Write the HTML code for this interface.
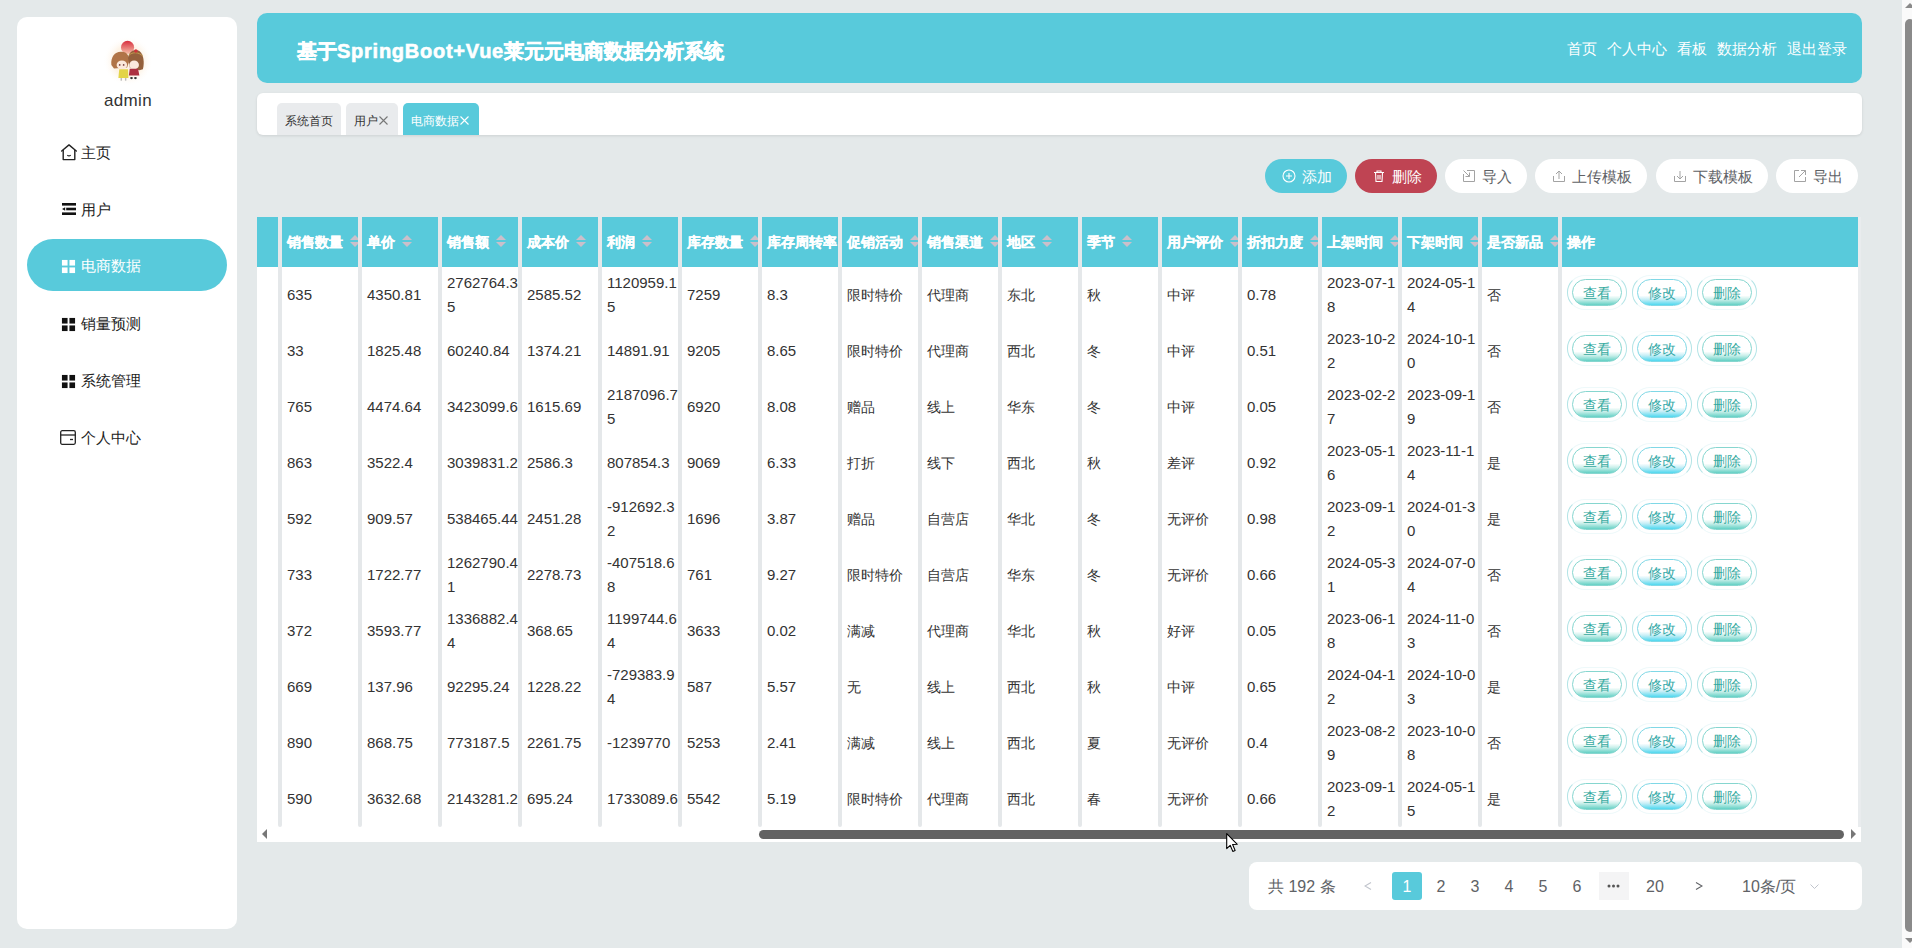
<!DOCTYPE html>
<html><head><meta charset="utf-8"><title>电商数据</title>
<style>
*{box-sizing:border-box;margin:0;padding:0}
html,body{width:1912px;height:948px;overflow:hidden}
body{background:#e4e9ea;font-family:"Liberation Sans",sans-serif;color:#333;position:relative}
.side{position:absolute;left:17px;top:17px;width:220px;height:912px;background:#fff;border-radius:10px}
.avatar{position:absolute;left:83px;top:17px;width:56px;height:56px}
.uname{position:absolute;left:1px;width:220px;top:74px;text-align:center;font-size:17px;color:#333;line-height:20px;letter-spacing:0.3px}
.menu{position:absolute;left:10px;top:222px}
.mi{position:absolute;left:10px;width:200px;height:52px;border-radius:26px;font-size:15px;color:#222;line-height:54px}
.mi .ic{position:absolute;left:34px;top:20px;width:15px;height:15px}
.mi .tx{position:absolute;left:54px;top:0}
.mi.act{background:#58cadb;color:#fff}
.hdr{position:absolute;left:257px;top:13px;width:1605px;height:70px;background:#58cadb;border-radius:10px}
.title{position:absolute;left:40px;top:26px;font-size:20px;font-weight:bold;color:#fff;-webkit-text-stroke:0.6px #fff;line-height:24px;white-space:nowrap}
.nav{position:absolute;right:15px;top:27px;font-size:15px;color:#fff;line-height:18px;white-space:nowrap}
.nav span{margin-left:10px}
.tabs{position:absolute;left:257px;top:93px;width:1605px;height:42px;background:#fff;border-radius:6px;box-shadow:0 1px 3px rgba(0,0,0,.1)}
.tab{position:absolute;top:10px;height:32px;background:#e9ebed;border-radius:5px 5px 0 0;font-size:12px;color:#333;line-height:36px;padding-left:8px;white-space:nowrap}
.tab.act{background:#58cadb;color:#fff}
.btn{position:absolute;top:159px;height:34px;border-radius:17px;font-size:15px;line-height:36px;white-space:nowrap;background:#fff;color:#606266}
.btn .bi{position:absolute;top:10px;width:14px;height:14px}
.btn .bt{position:absolute;top:0}
.btn.add{background:#58cadb;color:#fff}
.btn.del{background:#bf4453;color:#fff}
.table{position:absolute;left:257px;top:217px;width:1604px;height:625px;background:#fff;overflow:hidden}
.thead{position:absolute;left:0;top:0;height:50px;width:1605px;background:#e4e9ea}
.th{position:absolute;top:0;height:50px;background:#58cadb;color:#fff;font-weight:bold;font-size:14px;line-height:50px;overflow:hidden;white-space:nowrap}
.th{padding-left:5px}.th .ht{-webkit-text-stroke:0.25px #fff}.th .ht{display:inline-block;vertical-align:top}
.caret{display:inline-block;position:relative;vertical-align:top;margin-top:18px;margin-left:7px;width:10px;height:12px}
.caret i{position:absolute;left:0;width:0;height:0;border:5px solid transparent}
.caret .up{top:-5px;border-bottom-color:#cbbfca}
.caret .dn{top:7px;border-top-color:#cbbfca}
.tbody{position:absolute;left:0;top:50px;width:1605px;height:560px}
.tr{position:relative;height:56px}
.td{position:absolute;top:0;height:56px;font-size:14px;color:#333}
.td .cell{position:absolute;left:5px;width:68px;top:50%;transform:translateY(-50%);line-height:24px;word-break:break-all}
.vsep{position:absolute;top:0;width:4px;height:610px;background:#e5e8ea;border-radius:0 0 2px 2px}
.cop{}
.ob{position:absolute;top:8px;width:60px;height:35px;border-radius:18px/17px;border:1px solid #b3e4e6;border-top-color:#eef9fa;border-bottom-color:#eef9fa}
.ib{position:absolute;left:4px;top:3px;width:50px;height:27px;border-radius:14px;border:1px solid #86d6cf;font-size:14px;line-height:27px;text-align:center;color:#35aa9f;background:linear-gradient(#fff 0%,#fff 62%,#c9efea 78%,#62d0c4 100%)}
.ib.b2{border-color:#80d8e6;color:#35a9a8;background:linear-gradient(#fff 0%,#fff 62%,#c5eef6 78%,#4fd8ef 100%)}
.hscroll{position:absolute;left:0;top:610px;width:1604px;height:15px;background:#fff}
.thumb{position:absolute;left:502px;top:3px;width:1085px;height:9px;border-radius:5px;background:#636363}
.la{position:absolute;left:5px;top:2px;width:0;height:0;border:5px solid transparent;border-right:5px solid #777;border-left:0}
.ra{position:absolute;left:1594px;top:2px;width:0;height:0;border:5px solid transparent;border-left:5px solid #777;border-right:0}
.pager{position:absolute;left:1249px;top:862px;width:613px;height:48px;background:#fff;border-radius:8px;font-size:16px;color:#606266}
.pg{position:absolute;top:10px;height:28px;line-height:30px;text-align:center;min-width:30px;white-space:nowrap}
.pg.act{background:#58cadb;color:#fff;border-radius:3px}
.pg.more{background:#f4f4f5}
.vscroll{position:absolute;left:1902px;top:0;width:10px;height:948px;background:#fafafa}
.vthumb{position:absolute;left:3px;top:19px;width:10px;height:913px;border-radius:5px;background:#8a8a8a}

.title .lat{letter-spacing:0.75px}
.cursor{position:absolute;left:1226px;top:833px;width:13px;height:20px}
.va{position:absolute;left:3px;width:0;height:0;border:5px solid transparent}
.va.u{top:-2px;border-bottom-color:#8a8a8a}
.va.d{top:938px;border-top-color:#8a8a8a}
.tab .x{display:inline-block;width:9px;height:9px;vertical-align:top;margin-top:13px;margin-left:1px}
.sv{position:absolute}
.rsep{position:absolute;left:1601px;top:0;width:4px;height:610px;background:#e9ecee}
.td .cell.num{font-size:15px;width:72px}

</style></head><body>
<div class="side">
  <div class="avatar">
    <svg width="56" height="56" viewBox="0 0 56 56">
      <defs><linearGradient id="sun" x1="0" y1="0" x2="0" y2="1"><stop offset="0" stop-color="#d83040"/><stop offset="1" stop-color="#f6c0a8"/></linearGradient>
      <radialGradient id="glow"><stop offset="0.6" stop-color="#fdf3e6"/><stop offset="1" stop-color="#fff" stop-opacity="0"/></radialGradient></defs>
      <circle cx="28" cy="27" r="25" fill="url(#glow)"/>
      <g transform="translate(3.5 3.8) scale(0.875)">
      <circle cx="27.5" cy="11" r="7.5" fill="url(#sun)"/>
      <path d="M9 31 C8 21 14 15 21 16 C27 16 30 21 29 28 L27 34 L12 35Z" fill="#b07448"/>
      <path d="M28 23 C29 15 36 12 41 15 C46 19 47 28 45 36 L41 37 L30 34Z" fill="#94603c"/>
      <path d="M29 20 C33 16 40 16 45 21" fill="none" stroke="#c8a050" stroke-width="1"/>
      <circle cx="37" cy="15" r="2" fill="#d0303a"/>
      <ellipse cx="21" cy="31" rx="6" ry="5" fill="#fbe9dc"/>
      <ellipse cx="35" cy="31" rx="5.5" ry="5" fill="#fbe9dc"/>
      <circle cx="18.5" cy="31" r="1" fill="#7a4040"/><circle cx="23" cy="31" r="1" fill="#7a4040"/>
      <path d="M18 36 H28 L28.5 46 H17Z" fill="#e3d448"/>
      <path d="M30 35.5 H39.5 L41 43 H29Z" fill="#ad3040"/>
      <rect x="19.5" y="46" width="1.6" height="3" fill="#bbb"/><rect x="24.5" y="46" width="1.6" height="3" fill="#bbb"/>
      <ellipse cx="32" cy="46" rx="1.6" ry="1.3" fill="#333"/><ellipse cx="36.5" cy="46" rx="1.6" ry="1.3" fill="#333"/>
      </g>
    </svg>
  </div>
  <div class="uname">admin</div>
</div>
<div class="mi" style="left:27px;top:126px"><svg class="ic" style="width:16px;height:17px;top:18px;left:34px" viewBox="0 0 16 17"><path d="M0.7 7 L8 0.9 L15.3 7" fill="none" stroke="#222" stroke-width="1.4" stroke-linecap="round" stroke-linejoin="round"/><path d="M2.2 5.9 V15.6 H13.8 V5.9" fill="none" stroke="#222" stroke-width="1.4" stroke-linejoin="round"/><path d="M6.3 11.3 Q8 12.6 9.7 11.3" fill="none" stroke="#222" stroke-width="1.2"/></svg><span class="tx">主页</span></div>
<div class="mi" style="left:27px;top:183px"><svg class="ic" style="width:14px;height:12px;top:20px;left:35px" viewBox="0 0 14 12"><rect x="0" y="0" width="14" height="2.6" fill="#111"/><rect x="4.2" y="4.7" width="9.8" height="2.6" fill="#111"/><rect x="0" y="9.4" width="14" height="2.6" fill="#111"/><path d="M0 6 L3.2 4.2 L3.2 7.8Z" fill="#111"/></svg><span class="tx">用户</span></div>
<div class="mi act" style="left:27px;top:239px"><svg class="ic" viewBox="0 0 16 16"><rect x="1" y="1" width="6" height="6" fill="#fff"/><rect x="9" y="1" width="6" height="6" fill="#fff"/><rect x="1" y="9" width="6" height="6" fill="#fff"/><rect x="9" y="9" width="6" height="6" fill="#fff"/></svg><span class="tx">电商数据</span></div>
<div class="mi" style="left:27px;top:297px"><svg class="ic" viewBox="0 0 16 16"><rect x="1" y="1" width="6" height="6" fill="#111"/><rect x="9" y="1" width="6" height="6" fill="#111"/><rect x="1" y="9" width="6" height="6" fill="#111"/><rect x="9" y="9" width="6" height="6" fill="#111"/></svg><span class="tx">销量预测</span></div>
<div class="mi" style="left:27px;top:354px"><svg class="ic" viewBox="0 0 16 16"><rect x="1" y="1" width="6" height="6" fill="#111"/><rect x="9" y="1" width="6" height="6" fill="#111"/><rect x="1" y="9" width="6" height="6" fill="#111"/><rect x="9" y="9" width="6" height="6" fill="#111"/></svg><span class="tx">系统管理</span></div>
<div class="mi" style="left:27px;top:411px"><svg class="ic" style="width:16px;height:15px;top:19px;left:33px" viewBox="0 0 16 15"><rect x="0.7" y="0.7" width="14.6" height="13.6" rx="1.5" fill="none" stroke="#222" stroke-width="1.3"/><line x1="0.7" y1="5" x2="15.3" y2="5" stroke="#222" stroke-width="1.3"/><line x1="10" y1="9.5" x2="13" y2="9.5" stroke="#222" stroke-width="1.3"/></svg><span class="tx">个人中心</span></div>

<div class="hdr">
  <div class="title">基于<span class="lat">SpringBoot+Vue</span>莱元元电商数据分析系统</div>
  <div class="nav"><span>首页</span><span>个人中心</span><span>看板</span><span>数据分析</span><span>退出登录</span></div>
</div>
<div class="tabs">
  <div class="tab" style="left:20px;width:64px">系统首页</div>
  <div class="tab" style="left:89px;width:52px">用户<svg class="x" viewBox="0 0 9 9"><path d="M0.5 0.5L8.5 8.5M8.5 0.5L0.5 8.5" stroke="#777" stroke-width="1.1"/></svg></div>
  <div class="tab act" style="left:146px;width:76px">电商数据<svg class="x" viewBox="0 0 9 9"><path d="M0.5 0.5L8.5 8.5M8.5 0.5L0.5 8.5" stroke="#fff" stroke-width="1.1"/></svg></div>
</div>

<div class="btn add" style="left:1265px;width:82px"><svg class="bi" style="left:17px" viewBox="0 0 14 14"><circle cx="7" cy="7" r="6" fill="none" stroke="#fff" stroke-width="1.1"/><path d="M7 4V10M4 7H10" stroke="#fff" stroke-width="1.1"/></svg><span class="bt" style="left:37px">添加</span></div>
<div class="btn del" style="left:1355px;width:82px"><svg class="bi" style="left:17px" viewBox="0 0 14 14"><path d="M2 3.5H12M5 3.5V2H9V3.5M3.5 3.5L4 12.5H10L10.5 3.5M6 6V10.5M8 6V10.5" fill="none" stroke="#fff" stroke-width="1.1"/></svg><span class="bt" style="left:37px">删除</span></div>
<div class="btn" style="left:1445px;width:82px"><svg class="bi" style="left:17px" viewBox="0 0 14 14"><path d="M5 1.5H12.5V12.5H1.5V5M1.5 1.5L7.5 7.5M7.5 3.5V7.5H3.5" fill="none" stroke="#a3a3a3" stroke-width="1"/></svg><span class="bt" style="left:37px">导入</span></div>
<div class="btn" style="left:1535px;width:112px"><svg class="bi" style="left:17px" viewBox="0 0 14 14"><path d="M1.5 7V12.5H12.5V7M7 10V2M4 5L7 2L10 5" fill="none" stroke="#a3a3a3" stroke-width="1"/></svg><span class="bt" style="left:37px">上传模板</span></div>
<div class="btn" style="left:1656px;width:112px"><svg class="bi" style="left:17px" viewBox="0 0 14 14"><path d="M1.5 7V12.5H12.5V7M7 2V10M4 7L7 10L10 7" fill="none" stroke="#a3a3a3" stroke-width="1"/></svg><span class="bt" style="left:37px">下载模板</span></div>
<div class="btn" style="left:1776px;width:82px"><svg class="bi" style="left:17px" viewBox="0 0 14 14"><path d="M6 1.5H1.5V12.5H12.5V8M8 1.5H12.5V6M12.5 1.5L6 8" fill="none" stroke="#a3a3a3" stroke-width="1"/></svg><span class="bt" style="left:37px">导出</span></div>

<div class="table"><div class="thead"><div class="th c0" style="left:0;width:21px"></div><div class="th c" style="left:25px;width:76px"><span class="ht">销售数量</span><span class="caret"><i class="up"></i><i class="dn"></i></span></div><div class="th c" style="left:105px;width:76px"><span class="ht">单价</span><span class="caret"><i class="up"></i><i class="dn"></i></span></div><div class="th c" style="left:185px;width:76px"><span class="ht">销售额</span><span class="caret"><i class="up"></i><i class="dn"></i></span></div><div class="th c" style="left:265px;width:76px"><span class="ht">成本价</span><span class="caret"><i class="up"></i><i class="dn"></i></span></div><div class="th c" style="left:345px;width:76px"><span class="ht">利润</span><span class="caret"><i class="up"></i><i class="dn"></i></span></div><div class="th c" style="left:425px;width:76px"><span class="ht">库存数量</span><span class="caret"><i class="up"></i><i class="dn"></i></span></div><div class="th c" style="left:505px;width:76px"><span class="ht">库存周转率</span><span class="caret"><i class="up"></i><i class="dn"></i></span></div><div class="th c" style="left:585px;width:76px"><span class="ht">促销活动</span><span class="caret"><i class="up"></i><i class="dn"></i></span></div><div class="th c" style="left:665px;width:76px"><span class="ht">销售渠道</span><span class="caret"><i class="up"></i><i class="dn"></i></span></div><div class="th c" style="left:745px;width:76px"><span class="ht">地区</span><span class="caret"><i class="up"></i><i class="dn"></i></span></div><div class="th c" style="left:825px;width:76px"><span class="ht">季节</span><span class="caret"><i class="up"></i><i class="dn"></i></span></div><div class="th c" style="left:905px;width:76px"><span class="ht">用户评价</span><span class="caret"><i class="up"></i><i class="dn"></i></span></div><div class="th c" style="left:985px;width:76px"><span class="ht">折扣力度</span><span class="caret"><i class="up"></i><i class="dn"></i></span></div><div class="th c" style="left:1065px;width:76px"><span class="ht">上架时间</span><span class="caret"><i class="up"></i><i class="dn"></i></span></div><div class="th c" style="left:1145px;width:76px"><span class="ht">下架时间</span><span class="caret"><i class="up"></i><i class="dn"></i></span></div><div class="th c" style="left:1225px;width:76px"><span class="ht">是否新品</span><span class="caret"><i class="up"></i><i class="dn"></i></span></div><div class="th cop" style="left:1305px;width:296px"><span class="ht">操作</span></div></div><div class="tbody"><div class="tr"><div class="td c0" style="left:0;width:21px"></div><div class="td c" style="left:25px;width:76px"><div class="cell num">635</div></div><div class="td c" style="left:105px;width:76px"><div class="cell num">4350.81</div></div><div class="td c" style="left:185px;width:76px"><div class="cell num">2762764.35</div></div><div class="td c" style="left:265px;width:76px"><div class="cell num">2585.52</div></div><div class="td c" style="left:345px;width:76px"><div class="cell num">1120959.15</div></div><div class="td c" style="left:425px;width:76px"><div class="cell num">7259</div></div><div class="td c" style="left:505px;width:76px"><div class="cell num">8.3</div></div><div class="td c" style="left:585px;width:76px"><div class="cell">限时特价</div></div><div class="td c" style="left:665px;width:76px"><div class="cell">代理商</div></div><div class="td c" style="left:745px;width:76px"><div class="cell">东北</div></div><div class="td c" style="left:825px;width:76px"><div class="cell">秋</div></div><div class="td c" style="left:905px;width:76px"><div class="cell">中评</div></div><div class="td c" style="left:985px;width:76px"><div class="cell num">0.78</div></div><div class="td c" style="left:1065px;width:76px"><div class="cell num">2023-07-18</div></div><div class="td c" style="left:1145px;width:76px"><div class="cell num">2024-05-14</div></div><div class="td c" style="left:1225px;width:76px"><div class="cell">否</div></div><div class="td cop" style="left:1305px;width:296px"><span class="ob" style="left:5px"><span class="ib b1">查看</span></span><span class="ob" style="left:70px"><span class="ib b2">修改</span></span><span class="ob" style="left:135px"><span class="ib b3">删除</span></span></div></div><div class="tr"><div class="td c0" style="left:0;width:21px"></div><div class="td c" style="left:25px;width:76px"><div class="cell num">33</div></div><div class="td c" style="left:105px;width:76px"><div class="cell num">1825.48</div></div><div class="td c" style="left:185px;width:76px"><div class="cell num">60240.84</div></div><div class="td c" style="left:265px;width:76px"><div class="cell num">1374.21</div></div><div class="td c" style="left:345px;width:76px"><div class="cell num">14891.91</div></div><div class="td c" style="left:425px;width:76px"><div class="cell num">9205</div></div><div class="td c" style="left:505px;width:76px"><div class="cell num">8.65</div></div><div class="td c" style="left:585px;width:76px"><div class="cell">限时特价</div></div><div class="td c" style="left:665px;width:76px"><div class="cell">代理商</div></div><div class="td c" style="left:745px;width:76px"><div class="cell">西北</div></div><div class="td c" style="left:825px;width:76px"><div class="cell">冬</div></div><div class="td c" style="left:905px;width:76px"><div class="cell">中评</div></div><div class="td c" style="left:985px;width:76px"><div class="cell num">0.51</div></div><div class="td c" style="left:1065px;width:76px"><div class="cell num">2023-10-22</div></div><div class="td c" style="left:1145px;width:76px"><div class="cell num">2024-10-10</div></div><div class="td c" style="left:1225px;width:76px"><div class="cell">否</div></div><div class="td cop" style="left:1305px;width:296px"><span class="ob" style="left:5px"><span class="ib b1">查看</span></span><span class="ob" style="left:70px"><span class="ib b2">修改</span></span><span class="ob" style="left:135px"><span class="ib b3">删除</span></span></div></div><div class="tr"><div class="td c0" style="left:0;width:21px"></div><div class="td c" style="left:25px;width:76px"><div class="cell num">765</div></div><div class="td c" style="left:105px;width:76px"><div class="cell num">4474.64</div></div><div class="td c" style="left:185px;width:76px"><div class="cell num">3423099.6</div></div><div class="td c" style="left:265px;width:76px"><div class="cell num">1615.69</div></div><div class="td c" style="left:345px;width:76px"><div class="cell num">2187096.75</div></div><div class="td c" style="left:425px;width:76px"><div class="cell num">6920</div></div><div class="td c" style="left:505px;width:76px"><div class="cell num">8.08</div></div><div class="td c" style="left:585px;width:76px"><div class="cell">赠品</div></div><div class="td c" style="left:665px;width:76px"><div class="cell">线上</div></div><div class="td c" style="left:745px;width:76px"><div class="cell">华东</div></div><div class="td c" style="left:825px;width:76px"><div class="cell">冬</div></div><div class="td c" style="left:905px;width:76px"><div class="cell">中评</div></div><div class="td c" style="left:985px;width:76px"><div class="cell num">0.05</div></div><div class="td c" style="left:1065px;width:76px"><div class="cell num">2023-02-27</div></div><div class="td c" style="left:1145px;width:76px"><div class="cell num">2023-09-19</div></div><div class="td c" style="left:1225px;width:76px"><div class="cell">否</div></div><div class="td cop" style="left:1305px;width:296px"><span class="ob" style="left:5px"><span class="ib b1">查看</span></span><span class="ob" style="left:70px"><span class="ib b2">修改</span></span><span class="ob" style="left:135px"><span class="ib b3">删除</span></span></div></div><div class="tr"><div class="td c0" style="left:0;width:21px"></div><div class="td c" style="left:25px;width:76px"><div class="cell num">863</div></div><div class="td c" style="left:105px;width:76px"><div class="cell num">3522.4</div></div><div class="td c" style="left:185px;width:76px"><div class="cell num">3039831.2</div></div><div class="td c" style="left:265px;width:76px"><div class="cell num">2586.3</div></div><div class="td c" style="left:345px;width:76px"><div class="cell num">807854.3</div></div><div class="td c" style="left:425px;width:76px"><div class="cell num">9069</div></div><div class="td c" style="left:505px;width:76px"><div class="cell num">6.33</div></div><div class="td c" style="left:585px;width:76px"><div class="cell">打折</div></div><div class="td c" style="left:665px;width:76px"><div class="cell">线下</div></div><div class="td c" style="left:745px;width:76px"><div class="cell">西北</div></div><div class="td c" style="left:825px;width:76px"><div class="cell">秋</div></div><div class="td c" style="left:905px;width:76px"><div class="cell">差评</div></div><div class="td c" style="left:985px;width:76px"><div class="cell num">0.92</div></div><div class="td c" style="left:1065px;width:76px"><div class="cell num">2023-05-16</div></div><div class="td c" style="left:1145px;width:76px"><div class="cell num">2023-11-14</div></div><div class="td c" style="left:1225px;width:76px"><div class="cell">是</div></div><div class="td cop" style="left:1305px;width:296px"><span class="ob" style="left:5px"><span class="ib b1">查看</span></span><span class="ob" style="left:70px"><span class="ib b2">修改</span></span><span class="ob" style="left:135px"><span class="ib b3">删除</span></span></div></div><div class="tr"><div class="td c0" style="left:0;width:21px"></div><div class="td c" style="left:25px;width:76px"><div class="cell num">592</div></div><div class="td c" style="left:105px;width:76px"><div class="cell num">909.57</div></div><div class="td c" style="left:185px;width:76px"><div class="cell num">538465.44</div></div><div class="td c" style="left:265px;width:76px"><div class="cell num">2451.28</div></div><div class="td c" style="left:345px;width:76px"><div class="cell num">-912692.32</div></div><div class="td c" style="left:425px;width:76px"><div class="cell num">1696</div></div><div class="td c" style="left:505px;width:76px"><div class="cell num">3.87</div></div><div class="td c" style="left:585px;width:76px"><div class="cell">赠品</div></div><div class="td c" style="left:665px;width:76px"><div class="cell">自营店</div></div><div class="td c" style="left:745px;width:76px"><div class="cell">华北</div></div><div class="td c" style="left:825px;width:76px"><div class="cell">冬</div></div><div class="td c" style="left:905px;width:76px"><div class="cell">无评价</div></div><div class="td c" style="left:985px;width:76px"><div class="cell num">0.98</div></div><div class="td c" style="left:1065px;width:76px"><div class="cell num">2023-09-12</div></div><div class="td c" style="left:1145px;width:76px"><div class="cell num">2024-01-30</div></div><div class="td c" style="left:1225px;width:76px"><div class="cell">是</div></div><div class="td cop" style="left:1305px;width:296px"><span class="ob" style="left:5px"><span class="ib b1">查看</span></span><span class="ob" style="left:70px"><span class="ib b2">修改</span></span><span class="ob" style="left:135px"><span class="ib b3">删除</span></span></div></div><div class="tr"><div class="td c0" style="left:0;width:21px"></div><div class="td c" style="left:25px;width:76px"><div class="cell num">733</div></div><div class="td c" style="left:105px;width:76px"><div class="cell num">1722.77</div></div><div class="td c" style="left:185px;width:76px"><div class="cell num">1262790.41</div></div><div class="td c" style="left:265px;width:76px"><div class="cell num">2278.73</div></div><div class="td c" style="left:345px;width:76px"><div class="cell num">-407518.68</div></div><div class="td c" style="left:425px;width:76px"><div class="cell num">761</div></div><div class="td c" style="left:505px;width:76px"><div class="cell num">9.27</div></div><div class="td c" style="left:585px;width:76px"><div class="cell">限时特价</div></div><div class="td c" style="left:665px;width:76px"><div class="cell">自营店</div></div><div class="td c" style="left:745px;width:76px"><div class="cell">华东</div></div><div class="td c" style="left:825px;width:76px"><div class="cell">冬</div></div><div class="td c" style="left:905px;width:76px"><div class="cell">无评价</div></div><div class="td c" style="left:985px;width:76px"><div class="cell num">0.66</div></div><div class="td c" style="left:1065px;width:76px"><div class="cell num">2024-05-31</div></div><div class="td c" style="left:1145px;width:76px"><div class="cell num">2024-07-04</div></div><div class="td c" style="left:1225px;width:76px"><div class="cell">否</div></div><div class="td cop" style="left:1305px;width:296px"><span class="ob" style="left:5px"><span class="ib b1">查看</span></span><span class="ob" style="left:70px"><span class="ib b2">修改</span></span><span class="ob" style="left:135px"><span class="ib b3">删除</span></span></div></div><div class="tr"><div class="td c0" style="left:0;width:21px"></div><div class="td c" style="left:25px;width:76px"><div class="cell num">372</div></div><div class="td c" style="left:105px;width:76px"><div class="cell num">3593.77</div></div><div class="td c" style="left:185px;width:76px"><div class="cell num">1336882.44</div></div><div class="td c" style="left:265px;width:76px"><div class="cell num">368.65</div></div><div class="td c" style="left:345px;width:76px"><div class="cell num">1199744.64</div></div><div class="td c" style="left:425px;width:76px"><div class="cell num">3633</div></div><div class="td c" style="left:505px;width:76px"><div class="cell num">0.02</div></div><div class="td c" style="left:585px;width:76px"><div class="cell">满减</div></div><div class="td c" style="left:665px;width:76px"><div class="cell">代理商</div></div><div class="td c" style="left:745px;width:76px"><div class="cell">华北</div></div><div class="td c" style="left:825px;width:76px"><div class="cell">秋</div></div><div class="td c" style="left:905px;width:76px"><div class="cell">好评</div></div><div class="td c" style="left:985px;width:76px"><div class="cell num">0.05</div></div><div class="td c" style="left:1065px;width:76px"><div class="cell num">2023-06-18</div></div><div class="td c" style="left:1145px;width:76px"><div class="cell num">2024-11-03</div></div><div class="td c" style="left:1225px;width:76px"><div class="cell">否</div></div><div class="td cop" style="left:1305px;width:296px"><span class="ob" style="left:5px"><span class="ib b1">查看</span></span><span class="ob" style="left:70px"><span class="ib b2">修改</span></span><span class="ob" style="left:135px"><span class="ib b3">删除</span></span></div></div><div class="tr"><div class="td c0" style="left:0;width:21px"></div><div class="td c" style="left:25px;width:76px"><div class="cell num">669</div></div><div class="td c" style="left:105px;width:76px"><div class="cell num">137.96</div></div><div class="td c" style="left:185px;width:76px"><div class="cell num">92295.24</div></div><div class="td c" style="left:265px;width:76px"><div class="cell num">1228.22</div></div><div class="td c" style="left:345px;width:76px"><div class="cell num">-729383.94</div></div><div class="td c" style="left:425px;width:76px"><div class="cell num">587</div></div><div class="td c" style="left:505px;width:76px"><div class="cell num">5.57</div></div><div class="td c" style="left:585px;width:76px"><div class="cell">无</div></div><div class="td c" style="left:665px;width:76px"><div class="cell">线上</div></div><div class="td c" style="left:745px;width:76px"><div class="cell">西北</div></div><div class="td c" style="left:825px;width:76px"><div class="cell">秋</div></div><div class="td c" style="left:905px;width:76px"><div class="cell">中评</div></div><div class="td c" style="left:985px;width:76px"><div class="cell num">0.65</div></div><div class="td c" style="left:1065px;width:76px"><div class="cell num">2024-04-12</div></div><div class="td c" style="left:1145px;width:76px"><div class="cell num">2024-10-03</div></div><div class="td c" style="left:1225px;width:76px"><div class="cell">是</div></div><div class="td cop" style="left:1305px;width:296px"><span class="ob" style="left:5px"><span class="ib b1">查看</span></span><span class="ob" style="left:70px"><span class="ib b2">修改</span></span><span class="ob" style="left:135px"><span class="ib b3">删除</span></span></div></div><div class="tr"><div class="td c0" style="left:0;width:21px"></div><div class="td c" style="left:25px;width:76px"><div class="cell num">890</div></div><div class="td c" style="left:105px;width:76px"><div class="cell num">868.75</div></div><div class="td c" style="left:185px;width:76px"><div class="cell num">773187.5</div></div><div class="td c" style="left:265px;width:76px"><div class="cell num">2261.75</div></div><div class="td c" style="left:345px;width:76px"><div class="cell num">-1239770</div></div><div class="td c" style="left:425px;width:76px"><div class="cell num">5253</div></div><div class="td c" style="left:505px;width:76px"><div class="cell num">2.41</div></div><div class="td c" style="left:585px;width:76px"><div class="cell">满减</div></div><div class="td c" style="left:665px;width:76px"><div class="cell">线上</div></div><div class="td c" style="left:745px;width:76px"><div class="cell">西北</div></div><div class="td c" style="left:825px;width:76px"><div class="cell">夏</div></div><div class="td c" style="left:905px;width:76px"><div class="cell">无评价</div></div><div class="td c" style="left:985px;width:76px"><div class="cell num">0.4</div></div><div class="td c" style="left:1065px;width:76px"><div class="cell num">2023-08-29</div></div><div class="td c" style="left:1145px;width:76px"><div class="cell num">2023-10-08</div></div><div class="td c" style="left:1225px;width:76px"><div class="cell">否</div></div><div class="td cop" style="left:1305px;width:296px"><span class="ob" style="left:5px"><span class="ib b1">查看</span></span><span class="ob" style="left:70px"><span class="ib b2">修改</span></span><span class="ob" style="left:135px"><span class="ib b3">删除</span></span></div></div><div class="tr"><div class="td c0" style="left:0;width:21px"></div><div class="td c" style="left:25px;width:76px"><div class="cell num">590</div></div><div class="td c" style="left:105px;width:76px"><div class="cell num">3632.68</div></div><div class="td c" style="left:185px;width:76px"><div class="cell num">2143281.2</div></div><div class="td c" style="left:265px;width:76px"><div class="cell num">695.24</div></div><div class="td c" style="left:345px;width:76px"><div class="cell num">1733089.6</div></div><div class="td c" style="left:425px;width:76px"><div class="cell num">5542</div></div><div class="td c" style="left:505px;width:76px"><div class="cell num">5.19</div></div><div class="td c" style="left:585px;width:76px"><div class="cell">限时特价</div></div><div class="td c" style="left:665px;width:76px"><div class="cell">代理商</div></div><div class="td c" style="left:745px;width:76px"><div class="cell">西北</div></div><div class="td c" style="left:825px;width:76px"><div class="cell">春</div></div><div class="td c" style="left:905px;width:76px"><div class="cell">无评价</div></div><div class="td c" style="left:985px;width:76px"><div class="cell num">0.66</div></div><div class="td c" style="left:1065px;width:76px"><div class="cell num">2023-09-12</div></div><div class="td c" style="left:1145px;width:76px"><div class="cell num">2024-05-15</div></div><div class="td c" style="left:1225px;width:76px"><div class="cell">是</div></div><div class="td cop" style="left:1305px;width:296px"><span class="ob" style="left:5px"><span class="ib b1">查看</span></span><span class="ob" style="left:70px"><span class="ib b2">修改</span></span><span class="ob" style="left:135px"><span class="ib b3">删除</span></span></div></div></div><div class="vsep" style="left:21px"></div><div class="vsep" style="left:101px"></div><div class="vsep" style="left:181px"></div><div class="vsep" style="left:261px"></div><div class="vsep" style="left:341px"></div><div class="vsep" style="left:421px"></div><div class="vsep" style="left:501px"></div><div class="vsep" style="left:581px"></div><div class="vsep" style="left:661px"></div><div class="vsep" style="left:741px"></div><div class="vsep" style="left:821px"></div><div class="vsep" style="left:901px"></div><div class="vsep" style="left:981px"></div><div class="vsep" style="left:1061px"></div><div class="vsep" style="left:1141px"></div><div class="vsep" style="left:1221px"></div><div class="vsep" style="left:1301px"></div><div class="rsep"></div><div class="hscroll"><i class="la"></i><div class="thumb"></div><i class="ra"></i></div></div>

<div class="pager">
  <span class="pg" style="left:19px">共 192 条</span>
  <svg class="sv" style="left:115px;top:20px;width:8px;height:8px" viewBox="0 0 8 8"><path d="M7 0.5L1 4L7 7.5" fill="none" stroke="#c0c4cc" stroke-width="1.1"/></svg>
  <span class="pg act" style="left:143px">1</span>
  <span class="pg" style="left:177px">2</span>
  <span class="pg" style="left:211px">3</span>
  <span class="pg" style="left:245px">4</span>
  <span class="pg" style="left:279px">5</span>
  <span class="pg" style="left:313px">6</span>
  <span class="pg more" style="left:350px"></span>
  <svg class="sv" style="left:358px;top:22px;width:13px;height:4px" viewBox="0 0 13 4"><circle cx="2" cy="2" r="1.5" fill="#555"/><circle cx="6.5" cy="2" r="1.5" fill="#555"/><circle cx="11" cy="2" r="1.5" fill="#555"/></svg>
  <span class="pg" style="left:391px">20</span>
  <svg class="sv" style="left:446px;top:20px;width:8px;height:8px" viewBox="0 0 8 8"><path d="M1 0.5L7 4L1 7.5" fill="none" stroke="#606266" stroke-width="1.1"/></svg>
  <span class="pg" style="left:493px">10条/页</span>
  <svg class="sv" style="left:561px;top:22px;width:9px;height:5px" viewBox="0 0 9 5"><path d="M0.5 0.5L4.5 4.5L8.5 0.5" fill="none" stroke="#c0c4cc" stroke-width="1"/></svg>
</div>
<div class="vscroll"><i class="va u"></i><div class="vthumb"></div><i class="va d"></i></div>
<svg class="cursor" viewBox="0 0 13 20"><path d="M0.7 0.7 L0.7 15.6 L4.2 12.3 L6.8 18.4 L9.1 17.4 L6.6 11.5 L11.3 11.3 Z" fill="#fff" stroke="#000" stroke-width="1.1" stroke-linejoin="round"/></svg>

</body></html>
